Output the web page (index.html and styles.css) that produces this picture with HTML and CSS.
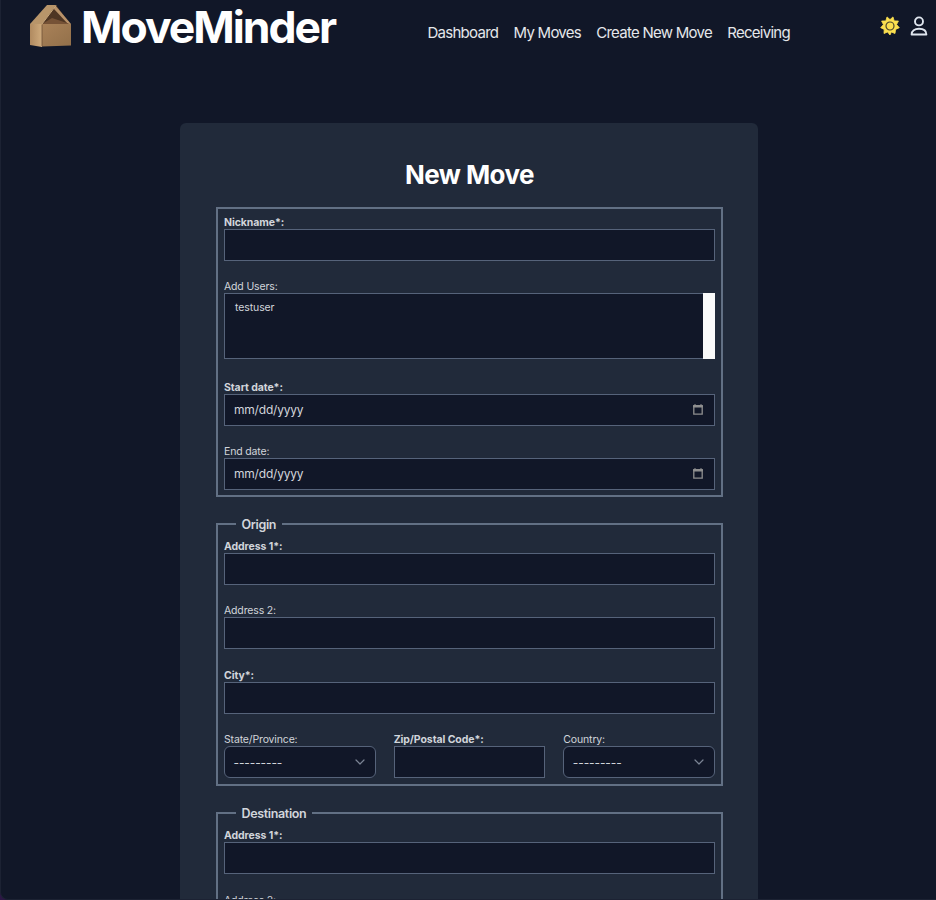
FILE: index.html
```html
<!DOCTYPE html>
<html lang="en">
<head>
<meta charset="utf-8">
<title>MoveMinder</title>
<link rel="stylesheet" href="styles.css">
</head>
<body>
<div class="window">
  <header class="header">
    <a class="brand">
      <svg class="logo" width="44" height="44" viewBox="0 0 44 44">
        <defs>
          <linearGradient id="side" x1="0" x2="1"><stop offset="0" stop-color="#b08a60"/><stop offset="1" stop-color="#cfab7d"/></linearGradient>
          <linearGradient id="front" x1="0" x2="1" y1="0" y2="1"><stop offset="0" stop-color="#a98158"/><stop offset="1" stop-color="#92704a"/></linearGradient>
        </defs>
        <path d="M14 20 28 1 42 20Z" fill="#4e3523"/>
        <path d="M2 20H14V43L2 41Z" fill="url(#side)"/>
        <path d="M2 20 19 1H28L14 20Z" fill="#b8956a"/>
        <path d="M27 1 43 20H40L26 5Z" fill="#b8926a"/>
        <path d="M14 20 24 14 42 20Z" fill="#765236"/>
        <path d="M14 20H43V41.5L14 42.5Z" fill="url(#front)"/>
        <path d="M14 20.5V42" stroke="#6e5035" stroke-width=".8"/>
        <path d="M14 20 28 1.5" fill="none" stroke="#cba87b"/>
      </svg>
      <span class="brand-name">MoveMinder</span>
    </a>
    <nav class="nav">
      <a>Dashboard</a><a>My Moves</a><a>Create New Move</a><a>Receiving</a>
    </nav>
    <div class="actions">
      <svg width="20" height="20" viewBox="0 0 20 20">
        <path d="M10 3.6 13 .9 14.2 4.9 18.4 5 16.6 8.6 19.3 11.7 15.6 13.4 15 17.5 11.3 16 10 19 7.6 16 4 17.5 4.2 13.4 .7 11.7 3.4 8.6 1.6 5 5.8 4.9 7 .9Z" fill="#fbdf4f" stroke="#fbdf4f" stroke-width=".8" stroke-linejoin="round"/>
        <circle cx="10" cy="10" r="4" fill="none" stroke="#4b452b" stroke-width="1.2"/>
      </svg>
      <svg width="18" height="20" viewBox="0 0 18 20" fill="none" stroke="#dfe5ee" stroke-width="1.9" stroke-linejoin="round">
        <circle cx="9" cy="5.4" r="4"/>
        <path d="M1.6 18.5C1.6 14.7 4.8 12.8 9 12.8S16.4 14.7 16.4 18.5Z"/>
      </svg>
    </div>
  </header>
  <main class="card">
    <h1>New Move</h1>
    <form>
      <section class="group first">
        <div class="field"><label class="required">Nickname*:</label><input class="control" type="text"></div>
        <div class="field"><label>Add Users:</label><div class="control list"><span>testuser</span><i class="scrollbar"></i></div></div>
        <div class="field"><label class="required">Start date*:</label>
          <div class="control date"><span>mm/dd/yyyy</span><svg width="10" height="11" viewBox="0 0 10 11"><path d="M.8 1.8H9.2V10.2H.8Z" fill="none" stroke="#8f8f8f" stroke-width="1.3"/><path d="M.5 1.5h9V3h-9ZM2 0v2M8 0v2" fill="#8f8f8f" stroke="#8f8f8f"/></svg></div></div>
        <div class="field"><label>End date:</label>
          <div class="control date"><span>mm/dd/yyyy</span><svg width="10" height="11" viewBox="0 0 10 11"><path d="M.8 1.8H9.2V10.2H.8Z" fill="none" stroke="#8f8f8f" stroke-width="1.3"/><path d="M.5 1.5h9V3h-9ZM2 0v2M8 0v2" fill="#8f8f8f" stroke="#8f8f8f"/></svg></div></div>
      </section>
      <fieldset class="group">
        <legend>Origin</legend>
        <div class="field"><label class="required">Address 1*:</label><input class="control" type="text"></div>
        <div class="field"><label>Address 2:</label><input class="control" type="text"></div>
        <div class="field"><label class="required">City*:</label><input class="control" type="text"></div>
        <div class="row">
          <div class="field"><label>State/Province:</label><div class="control select"><span>---------</span><svg width="10" height="6" viewBox="0 0 10 6"><path d="M1 1 5 5 9 1" fill="none" stroke="#7b8494" stroke-width="1.2" stroke-linecap="round" stroke-linejoin="round"/></svg></div></div>
          <div class="field"><label class="required">Zip/Postal Code*:</label><input class="control" type="text"></div>
          <div class="field"><label>Country:</label><div class="control select"><span>---------</span><svg width="10" height="6" viewBox="0 0 10 6"><path d="M1 1 5 5 9 1" fill="none" stroke="#7b8494" stroke-width="1.2" stroke-linecap="round" stroke-linejoin="round"/></svg></div></div>
        </div>
      </fieldset>
      <fieldset class="group">
        <legend>Destination</legend>
        <div class="field"><label class="required">Address 1*:</label><input class="control" type="text"></div>
        <div class="field"><label>Address 2:</label><input class="control" type="text"></div>
      </fieldset>
    </form>
  </main>
</div>
</body>
</html>
```
FILE: styles.css
```css
* { box-sizing: border-box; }
body {
  margin: 0;
  height: 900px;
  overflow: hidden;
  background: #2c1745;
  color: #d1d5db;
  font-family: Inter, "Liberation Sans", sans-serif;
}
.window {
  height: 900px;
  overflow: hidden;
  background: #111728;
  border-left: 1px solid #1c2233;
  border-bottom: 1px solid #1c2233;
  border-bottom-left-radius: 8px;
}
.header { display: flex; height: 60px; align-items: flex-start; }
.brand { display: flex; width: 399px; padding: 4px 0 0 27px; gap: 9px; }
.logo { flex: none; }
.brand-name { font-size: 44.5px; line-height: 47px; font-weight: 700; letter-spacing: -2px; color: #fff; }
.nav { display: flex; gap: 15.2px; padding: 22px 0 0 27.5px; font-size: 15px; line-height: 22px; letter-spacing: -0.73px; color: #e5e7eb; }
.nav a { white-space: nowrap; }
.actions { display: flex; gap: 10px; margin: 16px 8px 0 auto; }
.card {
  width: 578px;
  height: 840px;
  margin: 63px 0 0 179px;
  padding: 36px 35px 0 36px;
  border-radius: 6px;
  background: #212a3a;
}
h1 { margin: 0 0 16px; font-size: 26px; line-height: 32px; font-weight: 700; letter-spacing: -0.55px; text-align: center; color: #fff; }
.group {
  margin: 0 0 20px;
  padding: 6.5px 6px 5.5px;
  border: 2px solid #627084;
  min-width: 0;
}
.first { height: 290px; padding-top: 5px; margin-bottom: 19.5px; }
legend { margin-left: 11.5px; padding: 0 6px; font-size: 12.5px; line-height: 15px; font-weight: 600; letter-spacing: -0.35px; }
.field { min-width: 0; margin-bottom: 17.4px; }
.group > :last-child, .row .field { margin-bottom: 0; }
label { display: block; height: 15px; font-size: 10.5px; line-height: 17px; letter-spacing: -0.15px; white-space: nowrap; }
.required { font-weight: 700; letter-spacing: -0.08px; }
.control {
  display: flex;
  width: 100%;
  height: 32px;
  align-items: center;
  border: 1px solid #56637a;
  background: #111728;
  color: #d1d5db;
  font: inherit;
}
.list { position: relative; height: 66px; margin-bottom: 19.5px; padding: 6px 10px; align-items: flex-start; font-size: 10.5px; line-height: 15px; letter-spacing: -0.1px; }
.scrollbar { position: absolute; top: -1px; right: -1px; bottom: -1px; width: 12px; background: #fafafa; }
.date { justify-content: space-between; padding: 0 11px 1px 9px; font-size: 12px; letter-spacing: -0.2px; }
.row { display: grid; grid-template-columns: repeat(3, 1fr); gap: 18px; }
.select { justify-content: space-between; padding: 0 10px 0 8.5px; border-radius: 6px; font-size: 12px; letter-spacing: -0.1px; }
```
